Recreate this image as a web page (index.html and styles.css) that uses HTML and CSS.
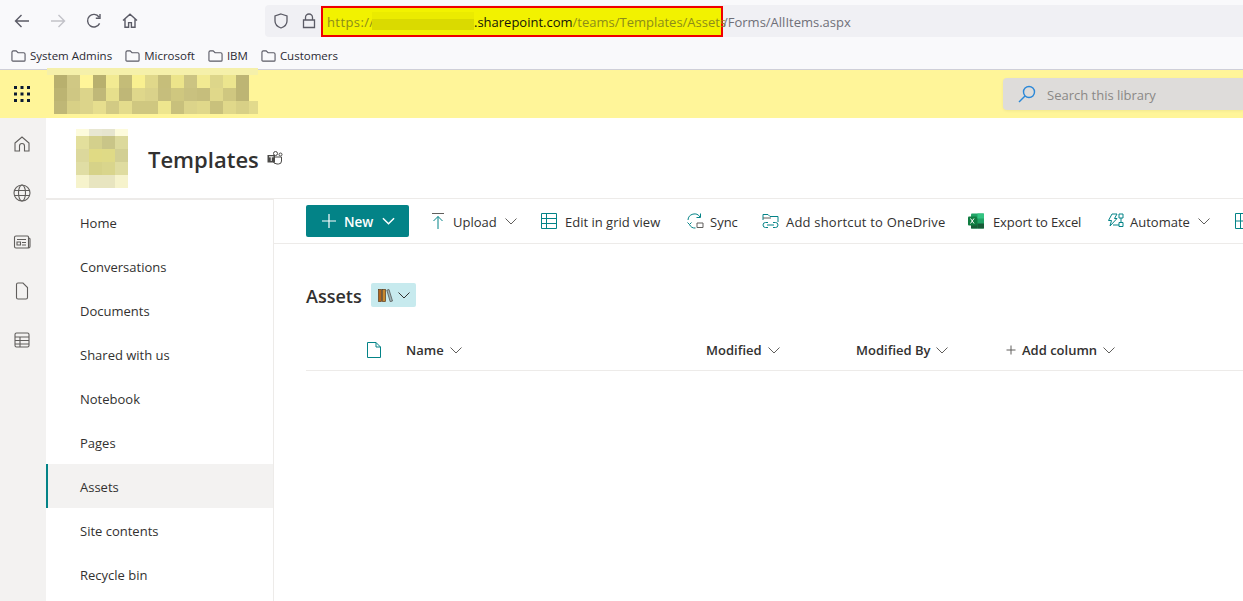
FILE: index.html
```html
<!DOCTYPE html>
<html>

<head>
  <meta charset="UTF-8">
  <title>Assets</title>
  <link rel="stylesheet" href="styles.css">
</head>

<body>
  <div class="browser">
    <div class="toolbar">
      <div class="nav-buttons">
        <svg class="tool-icon" viewBox="0 0 16 16"><path d="M15 8H1.500M7.500 2L1.500 8l6 6"/></svg>
        <svg class="tool-icon faded" viewBox="0 0 16 16"><path d="M1 8h13.500M8.500 2l6 6-6 6"/></svg>
        <svg class="tool-icon" viewBox="0 0 16 16"><path d="M13.600 10.400A6.300 6.300 0 1 1 13 4M14 1v4.200H9.800"/></svg>
        <svg class="tool-icon" viewBox="0 0 16 16"><path d="M1 7.600L8 1.200l7 6.400M3 6v8.200h3.600V9.600h2.800v4.600H13V6"/></svg>
      </div>
      <div class="address-bar">
        <svg class="addr-icon shield" viewBox="0 0 16 16"><path d="M8 1l6 2v5c0 3.400-2.600 5.800-6 7-3.400-1.200-6-3.600-6-7V3z"/></svg>
        <svg class="addr-icon lock" viewBox="0 0 16 16"><path d="M4.500 7V4.500a3.500 3.500 0 0 1 7 0V7M2.500 7h11v7.500h-11z"/></svg>
        <div class="url-mark"><span class="dim">https://</span><span class="blur-host"></span><span class="host">.sharepoint.com</span><span class="dim">/teams/Templates/Assets</span></div>
        <span class="url-rest">/Forms/AllItems.aspx</span>
      </div>
    </div>
    <div class="bookmarks">
      <div class="bookmark"><svg class="folder" viewBox="0 0 16 14"><path d="M1 3a1.500 1.500 0 0 1 1.500-1.500h3L7.500 3.500h6A1.500 1.500 0 0 1 15 5v6.500a1 1 0 0 1-1 1H2a1 1 0 0 1-1-1z"/></svg>System Admins</div>
      <div class="bookmark"><svg class="folder" viewBox="0 0 16 14"><path d="M1 3a1.500 1.500 0 0 1 1.500-1.500h3L7.500 3.500h6A1.500 1.500 0 0 1 15 5v6.500a1 1 0 0 1-1 1H2a1 1 0 0 1-1-1z"/></svg>Microsoft</div>
      <div class="bookmark"><svg class="folder" viewBox="0 0 16 14"><path d="M1 3a1.500 1.500 0 0 1 1.500-1.500h3L7.500 3.500h6A1.500 1.500 0 0 1 15 5v6.500a1 1 0 0 1-1 1H2a1 1 0 0 1-1-1z"/></svg>IBM</div>
      <div class="bookmark"><svg class="folder" viewBox="0 0 16 14"><path d="M1 3a1.500 1.500 0 0 1 1.500-1.500h3L7.500 3.500h6A1.500 1.500 0 0 1 15 5v6.500a1 1 0 0 1-1 1H2a1 1 0 0 1-1-1z"/></svg>Customers</div>
    </div>
  </div>

  <div class="suite-bar">
    <svg class="waffle" viewBox="0 0 16 16">
      <g fill="#0b1a33">
        <rect x="0" y="0" width="3" height="3"/><rect x="6.500" y="0" width="3" height="3"/><rect x="13" y="0" width="3" height="3"/>
        <rect x="0" y="6.500" width="3" height="3"/><rect x="6.500" y="6.500" width="3" height="3"/><rect x="13" y="6.500" width="3" height="3"/>
        <rect x="0" y="13" width="3" height="3"/><rect x="6.500" y="13" width="3" height="3"/><rect x="13" y="13" width="3" height="3"/>
      </g>
    </svg>
    <!-- pixelated tenant name -->
    <svg class="tenant-blur" width="211" height="48" viewBox="0 0 211 48">
      <rect x="0" y="0" width="211" height="7" fill="#f5f0aa"/>
      <g transform="translate(7 7)">
        <rect x="0" y="0" width="13" height="13" fill="#b8b06e"/><rect x="13" y="0" width="13" height="13" fill="#d0c884"/><rect x="26" y="0" width="13" height="13" fill="#fff599"/><rect x="39" y="0" width="13" height="13" fill="#b8b06e"/><rect x="52" y="0" width="13" height="13" fill="#f2ea92"/><rect x="65" y="0" width="13" height="13" fill="#c4bc78"/><rect x="78" y="0" width="13" height="13" fill="#f9f090"/><rect x="91" y="0" width="13" height="13" fill="#e0d88a"/><rect x="104" y="0" width="13" height="13" fill="#c6be7a"/><rect x="117" y="0" width="13" height="13" fill="#ece48a"/><rect x="130" y="0" width="13" height="13" fill="#ccc482"/><rect x="143" y="0" width="13" height="13" fill="#f2ea92"/><rect x="156" y="0" width="13" height="13" fill="#ddd68a"/><rect x="169" y="0" width="13" height="13" fill="#ece58e"/><rect x="182" y="0" width="13" height="13" fill="#bdb574"/>
        <rect x="0" y="13" width="13" height="13" fill="#bcb472"/><rect x="13" y="13" width="13" height="13" fill="#cfc783"/><rect x="26" y="13" width="13" height="13" fill="#dcd48a"/><rect x="39" y="13" width="13" height="13" fill="#c0b878"/><rect x="52" y="13" width="13" height="13" fill="#e6df8c"/><rect x="65" y="13" width="13" height="13" fill="#bfb777"/><rect x="78" y="13" width="13" height="13" fill="#dfd78b"/><rect x="91" y="13" width="13" height="13" fill="#dad28a"/><rect x="104" y="13" width="13" height="13" fill="#c6be7c"/><rect x="117" y="13" width="13" height="13" fill="#cfc77f"/><rect x="130" y="13" width="13" height="13" fill="#c9c17f"/><rect x="143" y="13" width="13" height="13" fill="#c6be7c"/><rect x="156" y="13" width="13" height="13" fill="#e0d88a"/><rect x="169" y="13" width="13" height="13" fill="#cfc780"/><rect x="182" y="13" width="13" height="13" fill="#bdb574"/>
        <rect x="0" y="26" width="13" height="13" fill="#bfb776"/><rect x="13" y="26" width="13" height="13" fill="#d8d086"/><rect x="26" y="26" width="13" height="13" fill="#dcd48a"/><rect x="39" y="26" width="13" height="13" fill="#e6de8e"/><rect x="52" y="26" width="13" height="13" fill="#d2ca84"/><rect x="65" y="26" width="13" height="13" fill="#e4dc8c"/><rect x="78" y="26" width="26" height="13" fill="#cfc780"/><rect x="104" y="26" width="13" height="13" fill="#eee68e"/><rect x="117" y="26" width="13" height="13" fill="#c8c07c"/><rect x="130" y="26" width="13" height="13" fill="#dcd48a"/><rect x="143" y="26" width="13" height="13" fill="#e0d88a"/><rect x="156" y="26" width="13" height="13" fill="#c9c17c"/><rect x="169" y="26" width="13" height="13" fill="#e0d88a"/><rect x="182" y="26" width="13" height="13" fill="#d8d086"/><rect x="195" y="26" width="9" height="13" fill="#e2da8c"/>
      </g>
    </svg>
    <div class="search-box">
      <svg class="search-icon" viewBox="0 0 18 18"><circle cx="11" cy="7" r="5.500"/><path d="M7 11l-6 6"/></svg>
      <span>Search this library</span>
    </div>
  </div>

  <div class="main">
    <div class="rail">
      <svg class="rail-icon" viewBox="0 0 18 18"><path d="M2 8l7-6 7 6v8h-4.500v-5a2.500 2.500 0 0 0-5 0v5H2z"/></svg>
      <svg class="rail-icon" viewBox="0 0 18 18"><circle cx="9" cy="9" r="8"/><ellipse cx="9" cy="9" rx="3.500" ry="8"/><path d="M1.500 6.500h15M1.500 11.500h15"/></svg>
      <svg class="rail-icon" viewBox="0 0 18 18"><path d="M3 3h11.500a1 1 0 0 1 1 1v10a1 1 0 0 1-1 1H3a1.500 1.500 0 0 1-1.500-1.500v-9A1.500 1.500 0 0 1 3 3zM15.500 5h.5a1 1 0 0 1 1 1v7.500a1.500 1.500 0 0 1-1.500 1.500M4 6.500h9M4 9h3.500v3H4zM9 9.500h4M9 12h4"/></svg>
      <svg class="rail-icon" viewBox="0 0 18 18"><path d="M3.500 2.500a1.500 1.500 0 0 1 1.500-1.500h5l4.500 4.500v10a1.500 1.500 0 0 1-1.500 1.500H5a1.500 1.500 0 0 1-1.500-1.500z"/></svg>
      <svg class="rail-icon" viewBox="0 0 18 18"><path d="M3.500 2h11A1.500 1.500 0 0 1 16 3.500v11a1.500 1.500 0 0 1-1.500 1.500h-11A1.500 1.500 0 0 1 2 14.500v-11A1.500 1.500 0 0 1 3.500 2zM2 6h14M2 9.500h14M2 13h14M7 6v10"/></svg>
    </div>

    <div class="site">
      <div class="site-head">
        <!-- pixelated site logo -->
        <svg class="site-logo" width="52" height="59" viewBox="0 0 52 59">
          <rect x="0" y="0" width="13" height="7" fill="#fdfbdc"/><rect x="13" y="0" width="13" height="7" fill="#e8e7d2"/><rect x="26" y="0" width="13" height="7" fill="#e6e5cf"/><rect x="39" y="0" width="13" height="7" fill="#fdfbdc"/>
          <rect x="0" y="7" width="13" height="13" fill="#e3df9c"/><rect x="13" y="7" width="13" height="13" fill="#d4d08c"/><rect x="26" y="7" width="13" height="13" fill="#c9c588"/><rect x="39" y="7" width="13" height="13" fill="#dcd99c"/>
          <rect x="0" y="20" width="13" height="13" fill="#dcd89c"/><rect x="13" y="20" width="13" height="13" fill="#e0da84"/><rect x="26" y="20" width="13" height="13" fill="#dfda86"/><rect x="39" y="20" width="13" height="13" fill="#d2cf94"/>
          <rect x="0" y="33" width="13" height="13" fill="#e0dda4"/><rect x="13" y="33" width="13" height="13" fill="#d6d288"/><rect x="26" y="33" width="13" height="13" fill="#d9d58c"/><rect x="39" y="33" width="13" height="13" fill="#dfdca0"/>
          <rect x="0" y="46" width="13" height="13" fill="#f6f3cc"/><rect x="13" y="46" width="13" height="13" fill="#e8e5c0"/><rect x="26" y="46" width="13" height="13" fill="#e8e5c0"/><rect x="39" y="46" width="13" height="13" fill="#f6f3cc"/>
        </svg>
        <h1 class="site-title">Templates</h1>
        <svg class="teams-icon" viewBox="0 0 16 14">
          <circle cx="8.500" cy="2.500" r="2" fill="none" stroke="#4b4a48"/>
          <circle cx="13.500" cy="3.500" r="1.500" fill="none" stroke="#4b4a48"/>
          <path d="M6 6h8.500v4a3 3 0 0 1-3 3h-1.500A4 4 0 0 1 6 9z" fill="none" stroke="#4b4a48"/>
          <rect x="0.500" y="4" width="7.500" height="7.500" fill="#4b4a48"/>
          <path d="M2 5.800h4.500M4.250 5.800v4.200" stroke="#fff" fill="none"/>
        </svg>
      </div>

      <div class="site-body">
        <div class="site-nav">
          <a class="nav-item">Home</a>
          <a class="nav-item">Conversations</a>
          <a class="nav-item">Documents</a>
          <a class="nav-item">Shared with us</a>
          <a class="nav-item">Notebook</a>
          <a class="nav-item">Pages</a>
          <a class="nav-item active">Assets</a>
          <a class="nav-item">Site contents</a>
          <a class="nav-item">Recycle bin</a>
        </div>

        <div class="content">
          <div class="command-bar">
            <button class="new-btn">
              <svg class="new-plus" viewBox="0 0 14 14"><path d="M7 0v14M0 7h14"/></svg>
              <span>New</span>
              <svg class="new-chev" viewBox="0 0 14 8"><path d="M1 1l6 6 6-6"/></svg>
            </button>
            <div class="cmd cmd-upload">
              <svg class="cmd-icon" viewBox="0 0 16 18"><path class="ink" d="M2 1.500h12"/><path class="teal" d="M8 17V4.500M3.500 9L8 4.500 12.500 9"/></svg>
              <span>Upload</span>
              <svg class="chev" viewBox="0 0 12 7"><path d="M.5.500L6 6 11.500.500"/></svg>
            </div>
            <div class="cmd cmd-grid">
              <svg class="cmd-icon" viewBox="0 0 16 16"><path class="teal" d="M.5.500h15v15H.5zM.5 5.500h15M.5 10.500h15M5.500.500v15"/></svg>
              <span>Edit in grid view</span>
            </div>
            <div class="cmd cmd-sync">
              <svg class="cmd-icon" viewBox="0 0 18 16"><path class="teal" d="M2 7a6.500 6.500 0 0 1 12-3M14.500.500V4.500H10.500M1.500 9.500l2 2 2-2M3.500 11.500a6 6 0 0 0 6 3.500"/><path class="ink" d="M11 10h6v4.500h-6z"/></svg>
              <span>Sync</span>
            </div>
            <div class="cmd cmd-short">
              <svg class="cmd-icon" viewBox="0 0 18 16"><path class="teal" d="M1 7V1.500h5L8 3.500h8V9"/><path class="ink" d="M1 5h8"/><path class="teal" d="M6 9.500H3.500a2.500 2.500 0 0 0 0 5H6M11 9.500h2.500a2.500 2.500 0 0 1 0 5H11M5 12h7"/></svg>
              <span>Add shortcut to OneDrive</span>
            </div>
            <div class="cmd cmd-excel">
              <svg class="cmd-icon" viewBox="0 0 16 16">
                <rect x="3" y="0.500" width="13" height="15" rx="1" fill="#21a366"/>
                <rect x="9.500" y="0.500" width="6.500" height="5" fill="#33c481"/>
                <rect x="3" y="5.500" width="6.500" height="5" fill="#107c41"/>
                <rect x="9.500" y="10.500" width="6.500" height="5" fill="#185c37"/>
                <rect x="3" y="10.500" width="6.500" height="5" fill="#185c37"/>
                <rect x="0" y="3.500" width="9" height="9" rx="1" fill="#107c41"/>
                <path d="M2.500 5.500l3.500 5M6 5.500l-3.500 5" stroke="#fff" fill="none"/>
              </svg>
              <span>Export to Excel</span>
            </div>
            <div class="cmd cmd-auto">
              <svg class="cmd-icon" viewBox="0 0 17 16"><path class="teal" d="M5 1h5L7.500 5.500H10L3 13l1.500-5.500H1.500zM12 1h4v4h-4zM12 9.500h4v4h-4zM14 5v4.500M6 12h6"/></svg>
              <span>Automate</span>
              <svg class="chev" viewBox="0 0 12 7"><path d="M.5.500L6 6 11.500.500"/></svg>
            </div>
            <div class="cmd cmd-more">
              <svg class="cmd-icon" viewBox="0 0 16 16"><path class="teal" d="M.5.500h15v15H.5zM.5 8h15M5.500.500v15"/></svg>
            </div>
          </div>

          <div class="library">
            <div class="library-head">
              <h2 class="library-title">Assets</h2>
              <button class="view-btn">
                <svg class="books" viewBox="0 0 15 13">
                  <rect x="0.500" y="0.500" width="3" height="12" fill="#b3651d" stroke="#5a3a1a" stroke-width=".7"/>
                  <rect x="4.500" y="0.500" width="3" height="12" fill="#c9892e" stroke="#5a3a1a" stroke-width=".7"/>
                  <path d="M8.800 1.200l2.200-.7 3.500 11.500-2.300.7z" fill="#9fb4b8" stroke="#4b4a48" stroke-width=".7"/>
                </svg>
                <svg class="chev dark" viewBox="0 0 12 7"><path d="M.5.500L6 6 11.500.500"/></svg>
              </button>
            </div>
            <div class="list-head">
              <div class="col col-icon">
                <svg class="file-icon" viewBox="0 0 14 16"><path d="M.5.500h8.500l4.500 4.500v10.500H.5zM9 .5v4.500h4.500"/></svg>
              </div>
              <div class="col col-name">Name <svg class="chev" viewBox="0 0 12 7"><path d="M.5.500L6 6 11.500.500"/></svg></div>
              <div class="col col-mod">Modified <svg class="chev" viewBox="0 0 12 7"><path d="M.5.500L6 6 11.500.500"/></svg></div>
              <div class="col col-by">Modified By <svg class="chev" viewBox="0 0 12 7"><path d="M.5.500L6 6 11.500.500"/></svg></div>
              <div class="col col-add"><svg class="add-plus" viewBox="0 0 10 10"><path d="M5 .5v9M.5 5h9"/></svg> Add column <svg class="chev" viewBox="0 0 12 7"><path d="M.5.500L6 6 11.500.500"/></svg></div>
            </div>
          </div>
        </div>
      </div>
    </div>
  </div>
</body>

</html>
```

FILE: styles.css
```css
* {
  margin: 0;
  padding: 0;
  box-sizing: border-box;
}

html,
body {
  height: 601px;
  overflow: hidden;
}

body {
  position: relative;
  background: #fff;
  font-family: 'Open Sans', 'Noto Sans', sans-serif;
  font-size: 13px;
  color: #323130;
}

svg {
  flex-shrink: 0;
}

/* Browser chrome */
.browser {
  height: 70px;
  background: #f9f9fb;
  border-bottom: 1px solid #cfcfd8;
}

.toolbar {
  display: flex;
  height: 42px;
  padding-top: 5px;
}

.nav-buttons {
  display: flex;
  align-items: center;
  gap: 20px;
  width: 265px;
  height: 32px;
  padding-left: 14px;
}

.tool-icon {
  width: 16px;
  height: 16px;
  fill: none;
  stroke: #5b5b66;
  stroke-width: 1.4;
}

.tool-icon.faded {
  stroke: #c2c2c8;
}

.address-bar {
  display: flex;
  align-items: center;
  flex: 1;
  height: 32px;
  padding-left: 8px;
  background: #f0f0f4;
  border-radius: 4px 0 0 4px;
  font-size: 13px;
}

.addr-icon {
  width: 16px;
  height: 16px;
  fill: none;
  stroke: #5b5b66;
  stroke-width: 1.3;
}

.lock {
  margin-left: 12px;
}

.url-mark {
  display: flex;
  align-items: center;
  flex-shrink: 0;
  width: 402px;
  height: 31px;
  margin-left: 4px;
  margin-top: 1px;
  padding: 1px 0 0 4px;
  background: #f2f200;
  border: 2px solid #f00000;
  white-space: nowrap;
}

.dim {
  color: #8c8c1a;
}

.url-mark .dim:first-child {
  width: 45px;
  letter-spacing: .4px;
}

.host {
  color: #15140a;
}

.blur-host {
  flex-shrink: 0;
  width: 102px;
  height: 18px;
  margin-top: -3px;
  background: linear-gradient(#ebeb00 7px, #dada00 7px);
}

.url-rest {
  padding-top: 2px;
  color: #6f6f78;
}

.bookmarks {
  display: flex;
  align-items: center;
  gap: 13px;
  height: 27px;
  padding-left: 11px;
  font-size: 11.5px;
  color: #2b2a33;
}

.bookmark {
  display: flex;
  align-items: center;
  gap: 4px;
}

.folder {
  width: 15px;
  height: 14px;
  fill: none;
  stroke: #5b5b66;
  stroke-width: 1.2;
}

/* Suite bar */
.suite-bar {
  display: flex;
  align-items: center;
  height: 48px;
  padding-left: 14px;
  background: #fff599;
}

.waffle {
  width: 16px;
  height: 16px;
}

.tenant-blur {
  position: absolute;
  left: 47px;
  top: 68px;
}

.search-box {
  display: flex;
  align-items: center;
  gap: 11px;
  width: 240px;
  height: 32px;
  margin-left: auto;
  padding-left: 15px;
  background: #dedcda;
  border-radius: 4px 0 0 4px;
  box-shadow: 0 1px 3px rgba(0, 0, 0, 0.06);
  color: #8a8886;
  font-size: 13px;
}

.search-box span {
  padding-top: 2px;
}

.search-icon {
  width: 18px;
  height: 18px;
  fill: none;
  stroke: #2b88d8;
  stroke-width: 1.4;
}

/* Page */
.main {
  display: flex;
  height: 483px;
}

.rail {
  display: flex;
  flex-direction: column;
  align-items: center;
  gap: 31px;
  width: 46px;
  padding: 17px 2px 0 0;
  background: #f3f2f1;
}

.rail-icon {
  width: 18px;
  height: 18px;
  fill: none;
  stroke: #605e5c;
  stroke-width: 1.1;
}

.site {
  flex: 1;
  min-width: 0;
}

.site-head {
  display: flex;
  align-items: center;
  height: 81px;
  padding-left: 30px;
  border-bottom: 1px solid #edebe9;
}

.site-logo {
  margin-top: 1px;
}

.site-title {
  margin-left: 20px;
  padding-top: 2px;
  font-size: 22px;
  font-weight: 600;
  color: #323130;
}

.teams-icon {
  width: 16px;
  height: 14px;
  margin-left: 8px;
}

.site-body {
  display: flex;
}

/* Left nav */
.site-nav {
  width: 228px;
  height: 402px;
  border-top: 1px solid #edebe9;
  border-right: 1px solid #edebe9;
}

.nav-item {
  display: block;
  height: 44px;
  padding-left: 34px;
  line-height: 46px;
}

.nav-item.active {
  padding-left: 32px;
  background: #f3f2f1;
  border-left: 2px solid #038387;
}

/* Command bar */
.content {
  flex: 1;
  min-width: 0;
  overflow: hidden;
}

.command-bar {
  display: flex;
  align-items: center;
  height: 45px;
  padding-left: 32px;
  border-bottom: 1px solid #edebe9;
  white-space: nowrap;
}

.new-btn {
  display: flex;
  align-items: center;
  flex-shrink: 0;
  width: 103px;
  height: 32px;
  padding-left: 16px;
  background: #038387;
  border: none;
  border-radius: 2px;
  color: #fff;
  font-family: inherit;
  font-size: 13.5px;
  font-weight: 600;
}

.new-btn span {
  padding-top: 2px;
}

.new-plus {
  width: 14px;
  height: 14px;
  margin-right: 8px;
  fill: none;
  stroke: #fff;
  stroke-width: 1.2;
}

.new-chev {
  width: 13px;
  height: 8px;
  margin-left: 9px;
  fill: none;
  stroke: #fff;
  stroke-width: 1.6;
}

.cmd {
  display: flex;
  align-items: center;
  flex-shrink: 0;
  margin-left: 23px;
}

.cmd span {
  padding-top: 2px;
}

.cmd-icon {
  width: 16px;
  height: 16px;
  margin-right: 8px;
  fill: none;
}

.teal {
  stroke: #038387;
  stroke-width: 1;
}

.ink {
  stroke: #605e5c;
  stroke-width: 1;
}

.chev {
  width: 12px;
  height: 7px;
  fill: none;
  stroke: #605e5c;
  stroke-width: 1;
}

.chev.dark {
  stroke: #323130;
}

.cmd-upload {
  width: 88px;
  margin-left: 21px;
}

.cmd-upload .cmd-icon {
  height: 18px;
  margin-right: 7px;
}

.cmd-upload .chev,
.cmd-auto .chev {
  margin-left: 8px;
}

.cmd-grid {
  width: 122px;
}

.cmd-sync {
  width: 53px;
}

.cmd-sync .cmd-icon,
.cmd-short .cmd-icon {
  width: 18px;
  margin-right: 6px;
}

.cmd-short {
  width: 183px;
  letter-spacing: .2px;
}

.cmd-excel {
  width: 114px;
  letter-spacing: -.1px;
}

.cmd-excel .cmd-icon {
  margin-right: 9px;
}

.cmd-auto {
  width: 105px;
  margin-left: 25px;
}

.cmd-auto .cmd-icon {
  width: 17px;
  margin-right: 6px;
}

/* Library */
.library {
  padding: 39px 0 0 32px;
}

.library-head {
  display: flex;
  align-items: center;
  height: 24px;
}

.library-title {
  padding-top: 2px;
  font-size: 18px;
  font-weight: 600;
  color: #323130;
}

.view-btn {
  display: flex;
  align-items: center;
  gap: 5px;
  width: 45px;
  height: 24px;
  margin-left: 9px;
  padding-left: 7px;
  background: #c7eaee;
  border: none;
  border-radius: 2px;
}

.books {
  width: 15px;
  height: 13px;
}

.list-head {
  display: flex;
  align-items: center;
  height: 41px;
  margin-top: 23px;
  border-bottom: 1px solid #edebe9;
  font-weight: 600;
  white-space: nowrap;
}

.col {
  display: flex;
  align-items: center;
  gap: 6px;
  flex-shrink: 0;
}

.col-icon {
  width: 100px;
  padding-left: 61px;
}

.file-icon {
  width: 14px;
  height: 16px;
  fill: none;
  stroke: #038387;
  stroke-width: 1;
}

.col-name {
  width: 300px;
}

.col-mod,
.col-by {
  width: 150px;
}

.add-plus {
  width: 10px;
  height: 10px;
  fill: none;
  stroke: #605e5c;
  stroke-width: 1;
}
```
